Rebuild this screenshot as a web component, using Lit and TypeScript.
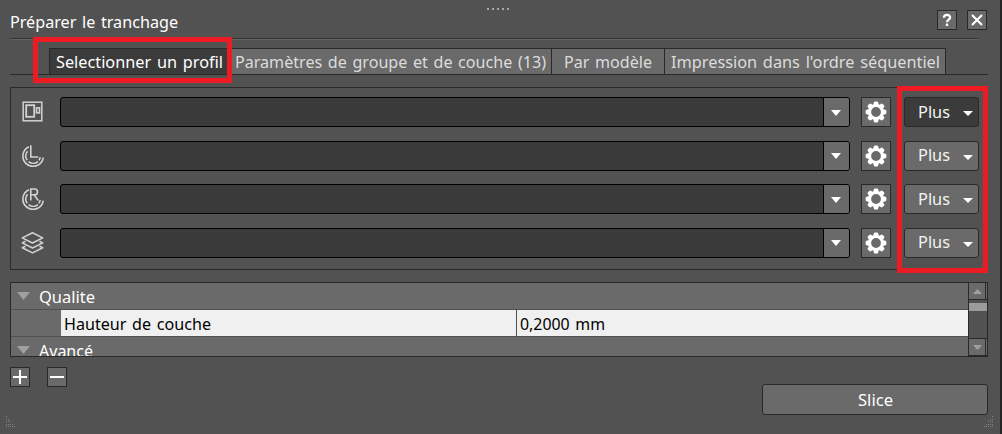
import { LitElement, html, css, svg } from "lit";
import { customElement, property } from "lit/decorators.js";

/** Text label set to a fixed advance width. */
@customElement("fit-label")
class FitLabel extends LitElement {
  @property() text = "";
  @property({ type: Number }) width = 100;
  @property({ type: Number }) size = 16.5;
  static styles = css`
    :host { display: block; flex: none; height: 24px; }
    svg { display: block; overflow: visible; }
    text { font-family: "Noto Sans", "Open Sans", sans-serif; fill: currentColor; word-spacing: 1.5px; }
  `;
  render() {
    return html`<svg width=${this.width} height="24">
      <text x="-1" y="18" font-size=${this.size} textLength=${this.width} lengthAdjust="spacingAndGlyphs">${this.text}</text>
    </svg>`;
  }
}

const label = (text: string, width: number, size = 16.5) =>
  html`<fit-label .text=${text} .width=${width} .size=${size}></fit-label>`;

const printer = svg`<g fill="none" stroke="#d2d2d2">
  <rect x="2.2" y="1.2" width="18.6" height="18.6" stroke-width="1.5"/>
  <rect x="5.2" y="4.2" width="8" height="11.6" stroke-width="1.8"/>
  <rect x="15.5" y="6.9" width="3" height="5" stroke-width="1.6"/></g>`;
const arcs = svg`<path d="M8 1.8A10.2 10.2 0 1 0 22.2 12.6M6.6 6.2A7.4 7.4 0 0 0 6.2 15.2M7.6 16.6A7.4 7.4 0 0 0 17 16.6M17.9 15.4A7.4 7.4 0 0 0 19.2 12.2"/>`;
const left = svg`<g fill="none" stroke="#d2d2d2" stroke-width="1.6">${arcs}<path d="M9.8 .3V12H17.2"/></g>`;
const right = svg`<g fill="none" stroke="#d2d2d2" stroke-width="1.6">${arcs}<path d="M9.8 12.6V1H13.6A2.9 2.9 0 0 1 13.6 6.8H9.8M13 6.8L17.3 12.6"/></g>`;
const layers = svg`<g fill="none" stroke="#d2d2d2" stroke-width="1.6" stroke-linejoin="round">
  <path d="M11.5 .8L21.7 5.9L11.5 11L1.3 5.9Z"/>
  <path d="M4.5 9.3L1.3 10.9L11.5 16L21.7 10.9L18.5 9.3M4.5 14.2L1.3 15.8L11.5 20.9L21.7 15.8L18.5 14.2"/></g>`;

const gear = html`<svg width="28" height="28" viewBox="-14 -14 28 28">
  <g fill="#fff">${[0, 45, 90, 135, 180, 225, 270, 315].map(
    (a) => svg`<path transform="rotate(${a})" d="M-2.9 -6.5L-2.2 -9.5Q-1.9 -10.4 -1 -10.4H1Q1.9 -10.4 2.2 -9.5L2.9 -6.5Z"/>`
  )}</g>
  <circle r="6.4" fill="none" stroke="#fff" stroke-width="3"/></svg>`;

@customElement("app-root")
class AppRoot extends LitElement {
  static styles = css`
    :host { display: block; width: 1002px; height: 434px; }
    * { box-sizing: border-box; }
    svg { display: block; }
    .window {
      position: relative; height: 434px; overflow: hidden; background: #525252;
      border-right: 2px solid #252525; color: #fff; padding: 0 12px 0 10px;
    }
    .grip { height: 10px; padding: 8px 0 0 477px; display: flex; gap: 3px; }
    .grip i { width: 2px; height: 2px; background: #a8a8a8; }
    .header { height: 28px; display: flex; align-items: flex-start; }
    .header fit-label { margin-left: 1px; flex: 1; }
    .sq {
      width: 20px; height: 20px; border: 1px solid #292929; background: #6a6a6a;
      display: flex; align-items: center; justify-content: center; flex: none;
    }
    .close { margin: 0 1px 0 12px; }
    .header .sq { position: relative; }
    .header .sq:not(.close) { margin-right: -2px; }
    .rule { height: 2px; width: 968px; background: #636363; border-top: 1px solid #333; }
    .tabs {
      margin-top: 8px; height: 27px; padding-left: 39px; display: flex;
      border-bottom: 1px solid #292929;
    }
    .tab {
      height: 26px; border: 1px solid #292929; border-left: 0; border-bottom: 0;
      background: #6a6a6a; color: #dcdcdc; padding-top: 1px;
    }
    .tab.active { width: 180px; background: #3b3b3b; border-left: 1px solid #292929; padding-left: 7px; color: #fff; }
    .t2 { width: 323px; padding-left: 7px; }
    .t3 { width: 113px; padding-left: 13px; }
    .t4 { width: 281px; padding-left: 7px; }
    .panel {
      margin-top: 12px; height: 183px; width: 978px; border: 1px solid #292929;
      padding: 9px 8px 11px 10px; display: flex; flex-direction: column; justify-content: space-between;
    }
    .row { height: 30px; display: flex; align-items: center; }
    .row .ico { width: 23px; margin-right: 16px; }
    .combo {
      width: 790px; height: 30px; border: 1px solid #000; border-radius: 3px;
      background: #3a3a3a; display: flex; justify-content: flex-end; overflow: hidden;
    }
    .drop {
      width: 26px; border-left: 1px solid #000; background: #6a6a6a;
      display: flex; align-items: center; justify-content: center; padding: 1px 1px 0 0;
    }
    .gear { width: 30px; height: 30px; border: 1px solid #292929; background: #6a6a6a; margin: 0 13px 0 11px; }
    .plus {
      width: 75px; height: 30px; border: 1px solid #292929; border-radius: 3px; background: #6a6a6a;
      display: flex; align-items: center; padding-left: 14px; color: #f4f4f4;
    }
    .plus.dark { background: #3b3b3b; }
    .plus svg { margin: 3px 0 0 12px; }
    .plus fit-label { margin-top: -1px; }
    .list {
      margin-top: 12px; height: 75px; width: 978px; border: 1px solid #292929;
      display: flex; overflow: hidden;
    }
    .rows { width: 957px; height: 73px; overflow: hidden; background: #6a6a6a; }
    .cat { height: 27px; border-bottom: 1px solid #505050; display: flex; padding-left: 6px; }
    .cat svg { margin: 9px 10px 0 0; }
    .cat fit-label { margin-top: 2px; }
    .item { height: 27px; border-bottom: 1px solid #505050; display: flex; padding-left: 50px; color: #000; }
    .item div { background: #f0f0f0; padding: 2px 0 0 4px; }
    .name { width: 456px; border-right: 1px solid #505050; }
    .value { flex: 1; }
    .scroll { width: 19px; border-left: 1px solid #292929; background: #525252; display: flex; flex-direction: column; }
    .arrow {
      height: 17px; background: #6a6a6a; border: 0 solid #292929; border-bottom-width: 1px;
      display: flex; align-items: center; justify-content: center; position: relative;
    }
    .arrow::after { content: ""; position: absolute; right: 1px; top: 0; bottom: 0; width: 1px; background: #292929; }
    .arrow svg { margin-right: 2px; }
    .arrow.down { border-top-width: 1px; height: 18px; margin-top: auto; }
    .thumb { height: 8px; background: #9b9b9b; margin-top: 3px; }
    .tools { margin-top: 10px; display: flex; gap: 17px; height: 17px; }
    .slice {
      margin-left: 752px; width: 226px; height: 31px; border: 1px solid #292929; border-radius: 3px;
      background: #6a6a6a; padding: 3px 0 0 96px;
    }
    .corner { display: flex; justify-content: space-between; margin: 1px -6px 0 -4px; }
    .mark { position: absolute; border: 5px solid #ed1c24; }
    .m1 { left: 33px; top: 37px; width: 199px; height: 46px; }
    .m2 { left: 897px; top: 86px; width: 91px; height: 187px; }
  `;

  private row(icon: unknown, dark = false) {
    return html`<div class="row">
      <svg class="ico" width="23" height="22" viewBox="0 0 23 22">${icon}</svg>
      <div class="combo"><div class="drop"><svg width="10" height="6"><path d="M0 0H10L5 6Z" fill="#fff"/></svg></div></div>
      <div class="gear">${gear}</div>
      <div class="plus ${dark ? "dark" : ""}">${label("Plus", 32)}<svg width="10" height="5"><path d="M0 0H10L5 5Z" fill="#fff"/></svg></div>
    </div>`;
  }

  private cornerDots(flip: boolean) {
    const dots = [];
    for (let r = 0; r < 5; r++)
      for (let c = 0; c < [1, 2, 3, 4, 5][r]; c++)
        dots.push(svg`<rect x=${flip ? 10 - c * 2 : c * 2} y=${r * 2.5} width="1" height="1"/>`);
    return html`<svg width="12" height="12" fill="#858585" shape-rendering="crispEdges">${dots}</svg>`;
  }

  render() {
    const tri = html`<svg width="13" height="8"><path d="M0 0H13L6.5 8Z" fill="#a0a0a0"/></svg>`;
    return html`<div class="window">
      <div class="grip"><i></i><i></i><i></i><i></i><i></i></div>
      <div class="header">
        ${label("Préparer le tranchage", 168)}
        <div class="sq"><svg width="18" height="18"><path d="M5.9 6.7C6 3.1 12.2 3 12.1 6.6C12 8.8 9 8.5 9 11.3" fill="none" stroke="#fff" stroke-width="2.3"/><rect x="7.8" y="12.6" width="2.4" height="2.4" fill="#fff"/></svg></div>
        <div class="sq close"><svg width="18" height="18"><path d="M4 4L14 14M14 4L4 14" stroke="#fff" stroke-width="2.1"/></svg></div>
      </div>
      <div class="rule"></div>
      <div class="tabs">
        <div class="tab active">${label("Selectionner un profil", 167)}</div>
        <div class="tab t2">${label("Paramètres de groupe et de couche (13)", 311)}</div>
        <div class="tab t3">${label("Par modèle", 88)}</div>
        <div class="tab t4">${label("Impression dans l'ordre séquentiel", 269)}</div>
      </div>
      <div class="panel">
        ${this.row(printer, true)}${this.row(left)}${this.row(right)}${this.row(layers)}
      </div>
      <div class="list">
        <div class="rows">
          <div class="cat">${tri}${label("Qualite", 56)}</div>
          <div class="item"><div class="name">${label("Hauteur de couche", 147)}</div><div class="value">${label("0,2000 mm", 85)}</div></div>
          <div class="cat">${tri}${label("Avancé", 54)}</div>
        </div>
        <div class="scroll">
          <div class="arrow"><svg width="9" height="5"><path d="M0 5H9L4.5 0Z" fill="#a0a0a0"/></svg></div>
          <div class="thumb"></div>
          <div class="arrow down"><svg width="9" height="5"><path d="M0 0H9L4.5 5Z" fill="#a0a0a0"/></svg></div>
        </div>
      </div>
      <div class="tools">
        <div class="sq"><svg width="18" height="18"><path d="M2 9H16M9 2V16" stroke="#fff" stroke-width="2"/></svg></div>
        <div class="sq"><svg width="18" height="18"><path d="M2 9H16" stroke="#fff" stroke-width="2"/></svg></div>
      </div>
      <div class="slice">${label("Slice", 35)}</div>
      <div class="corner">${this.cornerDots(false)}${this.cornerDots(true)}</div>
      <div class="mark m1"></div>
      <div class="mark m2"></div>
    </div>`;
  }
}
